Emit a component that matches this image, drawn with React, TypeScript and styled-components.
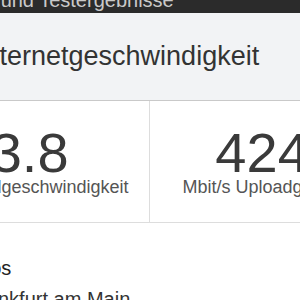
import React from 'react';
import styled, { createGlobalStyle } from 'styled-components';

const GlobalStyle = createGlobalStyle`
  html, body {
    margin: 0;
    padding: 0;
    background: #ffffff;
    overflow: hidden;
  }

  body {
    font-family: 'Liberation Sans', Arial, sans-serif;
    color: #333333;
  }

  #root {
    display: flex;
    justify-content: center;
    width: 300px;
    height: 300px;
    overflow: hidden;
  }
`;

const stats = [
  { value: '843.8', label: 'Mbit/s Downloadgeschwindigkeit' },
  { value: '424.17', label: 'Mbit/s Uploadgeschwindigkeit' },
];

const App = () => {
  return (
    <>
      <GlobalStyle />
      <Page>
        <TopBar>
          <TopBarTitle>Speedtest und Testergebnisse</TopBarTitle>
        </TopBar>

        <Header>
          <Title>Internetgeschwindigkeit</Title>
        </Header>

        <StatsRow>
          {stats.map((stat) => (
            <Stat key={stat.label}>
              <StatValue>{stat.value}</StatValue>
              <StatLabel>{stat.label}</StatLabel>
            </Stat>
          ))}
        </StatsRow>

        <Details>
          <DetailsHeading>Infos</DetailsHeading>
          <DetailsValue>Frankfurt am Main</DetailsValue>
        </Details>
      </Page>
    </>
  );
};

const Page = styled.div`
  flex: 0 0 604px;
  width: 604px;
  display: flex;
  flex-direction: column;
`;

const TopBar = styled.div`
  height: 13px;
  display: flex;
  align-items: flex-end;
  padding: 0 0 3px 57px;
  box-sizing: border-box;
  background: #2b2b2b;
`;

const TopBarTitle = styled.span`
  font-size: 20px;
  line-height: 20px;
  color: #c9c9c9;
  white-space: nowrap;
`;

const Header = styled.div`
  padding: 27px 0 28px 129px;
  background: #f2f3f5;
  border-bottom: 1px solid #c9c9c9;
`;

const Title = styled.h1`
  margin: 0;
  font-size: 27px;
  font-weight: 400;
  line-height: 32px;
  color: #333333;
  white-space: nowrap;
`;

const StatsRow = styled.div`
  display: grid;
  grid-template-columns: 1fr 1fr;
  border-bottom: 1px solid #dddddd;
  background: #ffffff;
`;

const Stat = styled.div`
  display: flex;
  flex-direction: column;
  align-items: center;
  padding: 28px 0 24px;
  text-align: center;

  &:first-child {
    border-right: 1px solid #dddddd;
  }
`;

const StatValue = styled.div`
  font-size: 56px;
  line-height: 47px;
  color: #3a3a3a;
  white-space: nowrap;
`;

const StatLabel = styled.div`
  font-size: 18px;
  line-height: 22px;
  color: #555555;
  white-space: nowrap;
`;

const Details = styled.div`
  display: flex;
  flex-direction: column;
  gap: 7px;
  padding: 33px 0 0 120px;
`;

const DetailsHeading = styled.h2`
  margin: 0;
  font-size: 20px;
  font-weight: 400;
  line-height: 24px;
  color: #222222;
`;

const DetailsValue = styled.div`
  font-size: 20px;
  line-height: 24px;
  color: #333333;
  white-space: nowrap;
`;

export default App;
